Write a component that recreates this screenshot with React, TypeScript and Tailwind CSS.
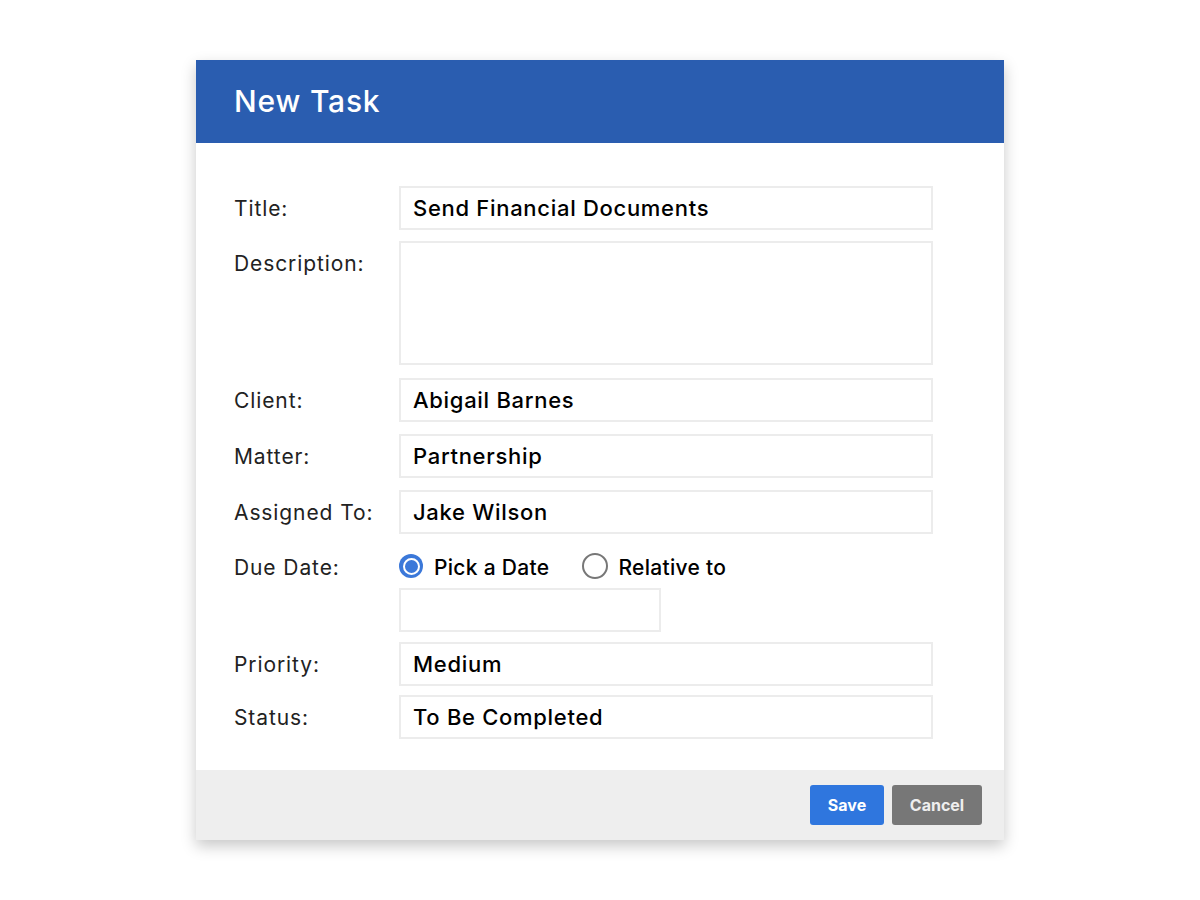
const font = { fontFamily: 'Inter, "Noto Sans", Arial, sans-serif' };

function Field({ value, className = "h-[44px]" }: { value?: string; className?: string }) {
  return (
    <div
      className={`${className} w-[534px] border-2 border-[#ececec] bg-white px-[12px] flex items-center text-[22px] font-medium tracking-[0.7px] text-black`}
    >
      {value}
    </div>
  );
}

function Row({ label, children, className = "" }: { label: string; children: React.ReactNode; className?: string }) {
  return (
    <div className={`flex items-start ${className}`}>
      <div className="w-[165px] h-[44px] pt-[2px] flex items-center text-[21px] tracking-[0.9px] text-[#222]">{label}</div>
      {children}
    </div>
  );
}

export default function App() {
  return (
    <div className="min-h-[900px] bg-white pt-[60px]" style={font}>
      <div className="mx-auto w-[808px] bg-white shadow-[0_6px_14px_rgba(0,0,0,0.22)]">
        {/* Header */}
        <div className="h-[83px] bg-[#2a5db0] pl-[38px] flex items-center">
          <h1 className="text-[30px] font-medium tracking-[0.8px] text-white">New Task</h1>
        </div>

        {/* Form */}
        <div className="pl-[38px] pt-[43px] pb-[31px] flex flex-col">
          <Row label="Title:">
            <Field value="Send Financial Documents" />
          </Row>
          <Row label="Description:" className="mt-[11px]">
            <Field className="h-[124px]" />
          </Row>
          <Row label="Client:" className="mt-[13px]">
            <Field value="Abigail Barnes" />
          </Row>
          <Row label="Matter:" className="mt-[12px]">
            <Field value="Partnership" />
          </Row>
          <Row label="Assigned To:" className="mt-[12px]">
            <Field value="Jake Wilson" />
          </Row>
          <Row label="Due Date:" className="mt-[11px]">
            <div className="flex flex-col">
              <div className="h-[42px] flex items-center text-[21px] font-medium tracking-[0.3px] text-black">
                <span className="w-[24px] h-[24px] rounded-full bg-[#3b78d9] flex items-center justify-center">
                  <span className="w-[17px] h-[17px] rounded-full border-2 border-white bg-[#3b78d9]" />
                </span>
                <span className="ml-[11px] mt-[4px]">Pick a Date</span>
                <span className="ml-[33px] w-[26px] h-[26px] rounded-full border-2 border-[#777]" />
                <span className="ml-[10px] mt-[4px]">Relative to</span>
              </div>
              <div className="mt-[1px] w-[262px] h-[44px] border-2 border-[#ececec]" />
            </div>
          </Row>
          <Row label="Priority:" className="mt-[10px]">
            <Field value="Medium" />
          </Row>
          <Row label="Status:" className="mt-[9px]">
            <Field value="To Be Completed" />
          </Row>
        </div>

        {/* Footer */}
        <div className="h-[70px] bg-[#eeeeee] flex items-center justify-end gap-[8px] pr-[22px]">
          <button className="w-[74px] h-[40px] rounded-[3px] bg-[#2f76de] text-white text-[16px] font-bold">
            Save
          </button>
          <button className="w-[90px] h-[40px] rounded-[3px] bg-[#777777] text-[#eeeeee] text-[16px] font-bold">
            Cancel
          </button>
        </div>
      </div>
    </div>
  );
}
